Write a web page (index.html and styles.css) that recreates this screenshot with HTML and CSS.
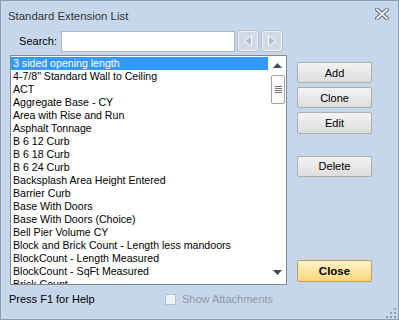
FILE: index.html
```html
<!DOCTYPE html>
<html>
	<head>
		<meta charset="utf-8" />
		<title>Standard Extension List</title>
		<link rel="stylesheet" href="styles.css">
	</head>
	<body>
		<div class="window">
			<div class="titlebar">
				<span class="title">Standard Extension List</span>
				<svg class="close_x" width="14" height="12" viewBox="0 0 14 12">
					<path d="M2 1.5 L12 10.5 M12 1.5 L2 10.5" stroke="#6f7b8c" stroke-width="4" stroke-linecap="square"/>
					<path d="M2 1.5 L12 10.5 M12 1.5 L2 10.5" stroke="#fff" stroke-width="1.6" stroke-linecap="square"/>
				</svg>
			</div>
			<div class="main">
				<div class="left">
					<div class="search">
						<label class="search_label">Search:</label>
						<input class="search_box" type="text">
						<span class="nav_btn">
							<svg width="12" height="14" viewBox="0 0 12 14"><path d="M9.5 1.5 L2.5 7 L9.5 12.5 Z" fill="#aebbd0" stroke="#fff" stroke-width="1"/></svg>
						</span>
						<span class="nav_btn">
							<svg width="12" height="14" viewBox="0 0 12 14"><path d="M2.5 1.5 L9.5 7 L2.5 12.5 Z" fill="#aebbd0" stroke="#fff" stroke-width="1"/></svg>
						</span>
					</div>
					<div class="listbox">
						<ul class="items">
							<li class="sel">3 sided opening length</li>
							<li>4-7/8" Standard Wall to Ceiling</li>
							<li>ACT</li>
							<li>Aggregate Base - CY</li>
							<li>Area with Rise and Run</li>
							<li>Asphalt Tonnage</li>
							<li>B 6 12 Curb</li>
							<li>B 6 18 Curb</li>
							<li>B 6 24 Curb</li>
							<li>Backsplash Area Height Entered</li>
							<li>Barrier Curb</li>
							<li>Base With Doors</li>
							<li>Base With Doors (Choice)</li>
							<li>Bell Pier Volume CY</li>
							<li>Block and Brick Count - Length less mandoors</li>
							<li>BlockCount - Length Measured</li>
							<li>BlockCount - SqFt Measured</li>
							<li>Brick Count</li>
						</ul>
						<div class="scrollbar">
							<div class="arrow up"><svg width="9" height="5" viewBox="0 0 9 5"><path d="M0 5 L4.5 0 L9 5 Z" fill="#3c4a5e"/></svg></div>
							<div class="thumb"><span></span><span></span><span></span><span></span></div>
							<div class="track"></div>
							<div class="arrow down"><svg width="9" height="5" viewBox="0 0 9 5"><path d="M0 0 L4.5 5 L9 0 Z" fill="#3c4a5e"/></svg></div>
						</div>
					</div>
				</div>
				<div class="right">
					<button class="btn">Add</button>
					<button class="btn">Clone</button>
					<button class="btn">Edit</button>
					<button class="btn delete">Delete</button>
					<button class="btn close">Close</button>
				</div>
			</div>
			<div class="status">
				<span class="help">Press F1 for Help</span>
				<span class="attach"><span class="check"></span>Show Attachments</span>
				<svg class="grip" width="11" height="10" viewBox="0 0 11 10">
					<rect x="8" y="0" width="2" height="2" fill="#8d9bb0"/>
					<rect x="4" y="4" width="2" height="2" fill="#8d9bb0"/>
					<rect x="8" y="4" width="2" height="2" fill="#8d9bb0"/>
					<rect x="0" y="8" width="2" height="2" fill="#8d9bb0"/>
					<rect x="4" y="8" width="2" height="2" fill="#8d9bb0"/>
					<rect x="8" y="8" width="2" height="2" fill="#8d9bb0"/>
				</svg>
			</div>
		</div>
	</body>
</html>
```

FILE: styles.css
```css
*{
	margin:0;
	padding:0;
	list-style: none;
	box-sizing: border-box;
}
body{
	font-family: "Liberation Sans", Arial, sans-serif;
	font-size: 11px;
	background: #c6d7ec;
}
.window{
	width: 399px;
	height: 320px;
	border: 1px solid #8e9cb0;
	background: #c6d7ec;
	display: flex;
	flex-direction: column;
}
.titlebar{
	height: 29px;
	padding: 0 9px 0 7px;
	display: flex;
	align-items: center;
	justify-content: space-between;
}
	.title{
		color: #333;
		font-size: 11.4px;
	}
	.close_x{margin-top: -4px;}
.main{
	display: flex;
	height: 256px;
	padding-left: 9px;
}
.left{
	width: 277px;
	display: flex;
	flex-direction: column;
}
.search{
	height: 22px;
	display: flex;
	align-items: center;
}
	.search_label{
		width: 47px;
		text-align: right;
		margin-right: 4px;
		color: #000;
		font-size: 11px;
	}
	.search_box{
		width: 174px;
		height: 21px;
		margin-top: 1px;
		margin-right: 2px;
		border: 1px solid #abb6c6;
		background: #fff;
	}
	.nav_btn{
		width: 22px;
		height: 22px;
		margin-right: 2px;
		border: 1px solid #b3bcc8;
		border-radius: 3px;
		background: #d2d9e4;
		box-shadow: inset 0 0 0 1px #eef1f6;
		display: flex;
		align-items: center;
		justify-content: center;
	}
.listbox{
	margin-top: 3px;
	height: 230px;
	border: 1px solid #828790;
	background: #fff;
	display: flex;
	overflow: hidden;
}
.items{
	flex: 1;
	padding-top: 1px;
	font-size: 10.6px;
	color: #000;
}
	.items li{
		height: 13px;
		line-height: 13px;
		padding-left: 2px;
		white-space: nowrap;
		margin-right: 1px;
	}
	.items .sel{
		background: #3399ff;
		color: #fff;
	}
.scrollbar{
	width: 17px;
	display: flex;
	flex-direction: column;
	background: #fff;
}
	.arrow{
		height: 17px;
		display: flex;
		align-items: center;
		justify-content: center;
	}
	.arrow.up{padding-top: 1px;}
	.arrow.down{height: 20px; padding-bottom: 4px;}
	.thumb{
		margin: 2px 1px 0 2px;
		height: 29px;
		border: 1px solid #9aa3ae;
		border-radius: 2px;
		background: #fbfbfb;
		display: flex;
		flex-direction: column;
		align-items: center;
		justify-content: center;
		gap: 1px;
	}
	.thumb span{
		width: 7px;
		height: 1px;
		background: #6d7682;
	}
	.track{flex: 1;}
.right{
	margin-left: 10px;
	padding-top: 32px;
	display: flex;
	flex-direction: column;
}
.btn{
	width: 75px;
	height: 22px;
	margin-bottom: 4px;
	border: 1px solid #adadad;
	border-radius: 2px;
	background: linear-gradient(#f3f3f3, #dddddd);
	font-family: "Liberation Sans", Arial, sans-serif;
	font-size: 11px;
	color: #000;
}
	.delete{margin-top: 18px;}
	.close{
		margin-top: 79px;
		height: 23px;
		border-color: #c2a15c;
		background: linear-gradient(#fff4cc, #fbd67a);
		font-weight: bold;
		font-size: 11.5px;
	}
.status{
	flex: 1;
	display: flex;
	align-items: flex-start;
	padding: 7px 0 0 8px;
	position: relative;
	font-size: 11px;
}
	.help{
		width: 156px;
		color: #000;
	}
	.attach{
		display: flex;
		align-items: center;
		color: #8f98a3;
	}
	.check{
		width: 11px;
		height: 11px;
		margin-right: 6px;
		border: 1px solid #b9c1cc;
		background: #eef1f5;
	}
	.grip{
		position: absolute;
		right: 1px;
		bottom: 1px;
	}
```
